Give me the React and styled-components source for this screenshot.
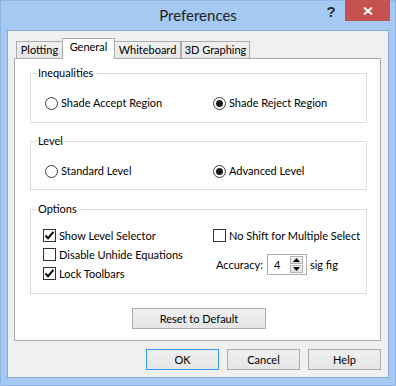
import React from "react";
import styled, { createGlobalStyle, css } from "styled-components";

const GlobalStyle = createGlobalStyle`
  html, body { margin: 0; padding: 0; background: #ffffff; }
  body {
    font-family: Lato, "Open Sans", "Liberation Sans", sans-serif;
    font-size: 11px;
    color: #000;
  }
  * { box-sizing: border-box; }
`;

const Window = styled.div`
  width: 396px;
  height: 386px;
  background: #a5c9f2;
  box-shadow: inset 0 0 0 1px #8fb5e0;
  display: flex;
  flex-direction: column;
`;

const TitleBar = styled.div`
  height: 30px;
  display: grid;
  grid-template-columns: 1fr auto 1fr;
  align-items: start;
`;

const Title = styled.div`
  grid-column: 2;
  line-height: 30px;
  font-size: 15px;
  color: #222;
`;

const Controls = styled.div`
  grid-column: 3;
  justify-self: end;
  display: flex;
  align-items: flex-start;
  margin-right: 6px;
`;

const HelpGlyph = styled.div`
  width: 28px;
  height: 21px;
  display: flex;
  align-items: center;
  justify-content: center;
  font-family: "Liberation Sans", sans-serif;
  font-weight: bold;
  font-size: 15px;
  color: #2b2b2b;
  padding-top: 2px;
`;

const CloseButton = styled.div`
  width: 45px;
  height: 21px;
  background: #c75050;
  display: flex;
  align-items: center;
  justify-content: center;
`;

const Client = styled.div`
  flex: 1;
  margin: 0 7px 8px 7px;
  border: 1px solid #8cabd2;
  background: #f0f0f0;
  padding: 7px 7px 0 6px;
  display: flex;
  flex-direction: column;
`;

const TabRow = styled.div`
  height: 20px;
  display: flex;
  align-items: flex-end;
  padding-left: 2px;
`;

const Tab = styled.div`
  width: ${(p) => p.$w}px;
  margin-left: ${(p) => p.$ml || 0}px;
  height: 17px;
  border: 1px solid #acacac;
  border-bottom: none;
  background: linear-gradient(#f0f0f0, #e8e8e8);
  text-align: center;
  line-height: 16px;
  white-space: nowrap;
  ${(p) =>
    p.$active &&
    css`
      height: 21px;
      margin-bottom: -1px;
      background: #ffffff;
      position: relative;
      z-index: 1;
      line-height: 15px;
    `}
`;

const Panel = styled.div`
  height: 283px;
  border: 1px solid #acacac;
  background: #ffffff;
  padding: 7px 13px 0 15px;
  display: flex;
  flex-direction: column;
`;

const Group = styled.fieldset`
  margin: ${(p) => p.$mt || 0}px 0 0 0;
  padding: 0;
  height: ${(p) => p.$h}px;
  border: 1px solid #dcdcdc;
  min-width: 0;
`;

const Legend = styled.legend`
  margin-left: 6px;
  padding: 0 1px;
  line-height: 14px;
  height: 14px;
`;

const RadioRow = styled.div`
  margin-top: 15px;
  height: 16px;
  display: grid;
  grid-template-columns: 168px 1fr;
  align-items: center;
  padding-left: 14px;
`;

const Choice = styled.label`
  display: flex;
  align-items: center;
  gap: ${(p) => p.$gap || 3}px;
  white-space: nowrap;
  line-height: 16px;
`;

const RadioCircle = styled.span`
  width: 13px;
  height: 13px;
  border-radius: 50%;
  border: 1px solid #3d3d3d;
  background: #fff;
  display: flex;
  align-items: center;
  justify-content: center;
  flex: none;
  &::after {
    content: "";
    width: 7px;
    height: 7px;
    border-radius: 50%;
    background: ${(p) => (p.$on ? "#1a1a1a" : "transparent")};
  }
`;

const Box = styled.span`
  width: 13px;
  height: 13px;
  border: 1px solid #333;
  background: #fff;
  display: flex;
  align-items: center;
  justify-content: center;
  flex: none;
`;

const OptionsGrid = styled.div`
  margin-top: 10px;
  display: grid;
  grid-template-columns: 170px 1fr;
  padding-left: 12px;
`;

const Column = styled.div`
  display: flex;
  flex-direction: column;
`;

const CheckRow = styled.div`
  height: 19px;
  display: flex;
  align-items: center;
`;

const AccuracyRow = styled.div`
  margin-top: 9px;
  height: 21px;
  display: flex;
  align-items: center;
  padding-left: 3px;
`;

const Spin = styled.div`
  width: 40px;
  height: 21px;
  margin: 0 3px 0 4px;
  border: 1px solid #abadb3;
  background: #fff;
  display: flex;
  align-items: center;
  justify-content: space-between;
  padding: 0 3px 0 6px;
`;

const SpinButtons = styled.div`
  display: flex;
  flex-direction: column;
`;

const SpinBtn = styled.div`
  width: 13px;
  height: 8px;
  border: 1px solid #b4b4b4;
  background: linear-gradient(#f6f6f6, #dddddd);
  display: flex;
  align-items: center;
  justify-content: center;
  & + & { margin-top: 1px; }
`;

const PushButton = styled.div`
  width: ${(p) => p.$w}px;
  height: 21px;
  border: 1px solid ${(p) => (p.$default ? "#3399ff" : "#acacac")};
  background: linear-gradient(#f0f0f0, #e5e5e5);
  display: flex;
  align-items: center;
  justify-content: center;
  line-height: 16px;
`;

const ResetWrap = styled.div`
  margin-top: 14px;
  display: flex;
  justify-content: center;
  margin-right: -1px;
`;

const ButtonBar = styled.div`
  margin-top: 8px;
  display: flex;
  justify-content: flex-end;
  gap: 8px;
`;

const Check = () => (
  <svg width="11" height="11" viewBox="0 0 11 11">
    <path d="M1.5 5.5 L4 8.2 L9.5 1.8" fill="none" stroke="#000" strokeWidth="1.9" />
  </svg>
);

const Arrow = ({ up }) => (
  <svg width="7" height="4" viewBox="0 0 7 4">
    <path d={up ? "M0 4 L3.5 0 L7 4 Z" : "M0 0 L7 0 L3.5 4 Z"} fill="#000" />
  </svg>
);

const Radio = ({ on, children }) => (
  <Choice>
    <RadioCircle $on={on} />
    <span>{children}</span>
  </Choice>
);

const CheckItem = ({ on, children }) => (
  <Choice $gap={3}>
    <Box>{on && <Check />}</Box>
    <span>{children}</span>
  </Choice>
);

export default function App() {
  return (
    <>
      <GlobalStyle />
      <Window>
        <TitleBar>
          <Title>Preferences</Title>
          <Controls>
            <HelpGlyph>?</HelpGlyph>
            <CloseButton>
              <svg width="10" height="8" viewBox="0 0 10 8">
                <path d="M1 0.5 L9 7.5 M9 0.5 L1 7.5" stroke="#fff" strokeWidth="2" />
              </svg>
            </CloseButton>
          </Controls>
        </TitleBar>
        <Client>
          <TabRow>
            <Tab $w={47}>Plotting</Tab>
            <Tab $w={53} $ml={-1} $active>General</Tab>
            <Tab $w={67} $ml={-1}>Whiteboard</Tab>
            <Tab $w={69}>3D Graphing</Tab>
          </TabRow>
          <Panel>
            <Group $h={57}>
              <Legend>Inequalities</Legend>
              <RadioRow>
                <Radio>Shade Accept Region</Radio>
                <Radio on>Shade Reject Region</Radio>
              </RadioRow>
            </Group>
            <Group $h={56} $mt={11}>
              <Legend>Level</Legend>
              <RadioRow>
                <Radio>Standard Level</Radio>
                <Radio on>Advanced Level</Radio>
              </RadioRow>
            </Group>
            <Group $h={92} $mt={12}>
              <Legend>Options</Legend>
              <OptionsGrid>
                <Column>
                  <CheckRow><CheckItem on>Show Level Selector</CheckItem></CheckRow>
                  <CheckRow><CheckItem>Disable Unhide Equations</CheckItem></CheckRow>
                  <CheckRow><CheckItem on>Lock Toolbars</CheckItem></CheckRow>
                </Column>
                <Column>
                  <CheckRow><CheckItem>No Shift for Multiple Select</CheckItem></CheckRow>
                  <AccuracyRow>
                    <span>Accuracy:</span>
                    <Spin>
                      <span>4</span>
                      <SpinButtons>
                        <SpinBtn><Arrow up /></SpinBtn>
                        <SpinBtn><Arrow /></SpinBtn>
                      </SpinButtons>
                    </Spin>
                    <span>sig fig</span>
                  </AccuracyRow>
                </Column>
              </OptionsGrid>
            </Group>
            <ResetWrap>
              <PushButton $w={134}>Reset to Default</PushButton>
            </ResetWrap>
          </Panel>
          <ButtonBar>
            <PushButton $w={73} $default>OK</PushButton>
            <PushButton $w={73}>Cancel</PushButton>
            <PushButton $w={73}>Help</PushButton>
          </ButtonBar>
        </Client>
      </Window>
    </>
  );
}
